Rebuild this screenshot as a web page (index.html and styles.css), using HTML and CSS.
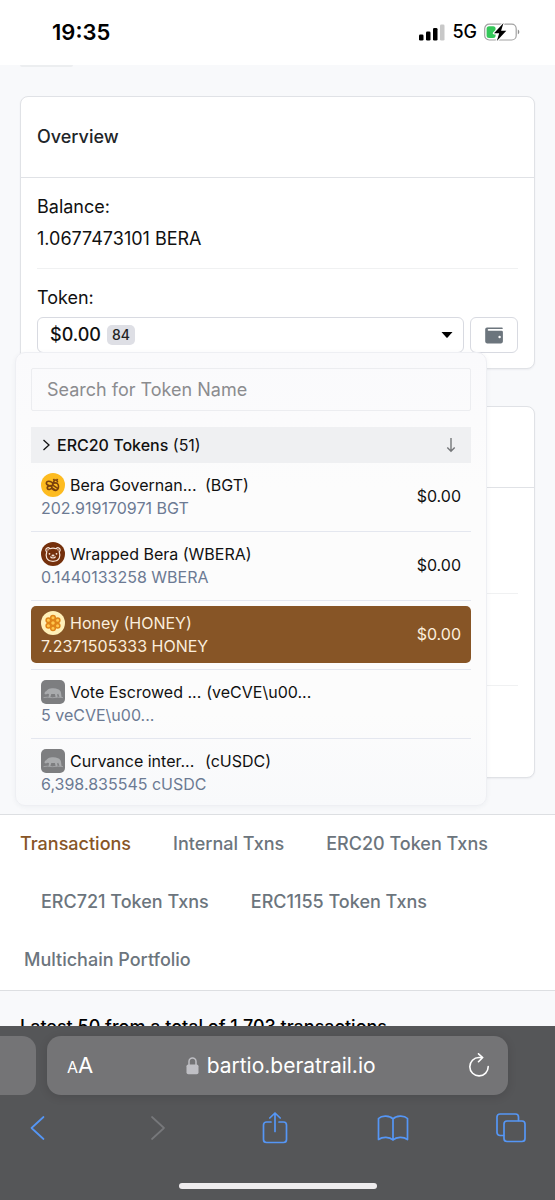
FILE: index.html
```html
<!DOCTYPE html>
<html lang="en">
<head>
<meta charset="utf-8">
<meta name="viewport" content="width=device-width, initial-scale=1">
<title>BeraTrail address</title>
<link rel="stylesheet" href="styles.css">
</head>
<body>
<svg width="0" height="0" class="defs" aria-hidden="true">
  <symbol id="bear" viewBox="0 0 24 24">
    <rect width="24" height="24" rx="5" fill="#7d7e80"/>
    <path d="M3.500 14c0-1.800.7-2.400 1.700-2.800 1-1.200 2.300-2.300 4.300-2.600 2.500-.5 5.500-.3 7.500.6 1.700.7 2.700 1.800 3 3.500l.6 4.600h-2l-1.400-3.500-1 .4.300 3.100h-1.800l-.8-3.300-3.600.1-1 3.200H7.600l.4-3.400-1.600-.2-1.400.9z" fill="#a9abad"/>
    <path d="M2.500 17.600l4-.4 5 .5 5-.5 5.500.4" fill="none" stroke="#a9abad" stroke-width=".8"/>
  </symbol>
</svg>
<div class="phone">
  <header class="status">
    <time class="clock">19:35</time>
    <div class="signals">
      <svg width="26" height="17" viewBox="0 0 26 17" aria-hidden="true">
        <rect x="0" y="10.500" width="4.500" height="6" rx="1.300"/><rect x="7" y="7.500" width="4.500" height="9" rx="1.300"/>
        <rect x="14" y="4" width="4.500" height="12.500" rx="1.300"/><rect x="21" y="0.500" width="4.500" height="16" rx="1.300" fill="#c8c8c8"/>
      </svg>
      <span class="network">5G</span>
      <svg width="36" height="18" viewBox="0 0 36 18" aria-hidden="true">
        <rect x=".7" y="1.200" width="31.500" height="15.800" rx="4.500" fill="none" stroke="#a2a2a2" stroke-width="1.200"/>
        <path d="M33.800 6.500c2 .8 2 4 0 4.800z" fill="#909090"/>
        <rect x="2.600" y="3.200" width="9" height="11.800" rx="2.500" fill="#34c759"/>
        <path d="M19.500 0L10 10.200h5.200L12.800 18 22.300 7.700h-5.200z" fill="#000" stroke="#fff" stroke-width="2.400" paint-order="stroke" stroke-linejoin="round"/>
      </svg>
    </div>
  </header>

  <main class="page">
    <div class="chip-end"></div>
    <section class="card">
      <h2 class="card-title">Overview</h2>
      <div class="card-body">
        <div class="row">
          <div>Balance:</div>
          <div>1.0677473101 BERA</div>
        </div>
        <div class="row row-token">
          <div>Token:</div>
          <div class="token-bar">
            <button class="token-toggle" type="button" aria-expanded="true">
              <span class="total">$0.00</span><span class="badge">84</span>
              <svg class="caret" width="12" height="6" viewBox="0 0 12 6" aria-hidden="true"><path d="M.5 0h11L6.600 5.500q-.6.6-1.200 0z"/></svg>
            </button>
            <button class="wallet" type="button" aria-label="Wallet">
              <svg width="18" height="17" viewBox="0 0 18 17" aria-hidden="true"><path d="M2 .5h15a.7.7 0 0 1 .7.7v.9H3.500a.8.800 0 0 0 0 1.600h13a1.400 1.400 0 0 1 1.400 1.400v9.500a1.800 1.800 0 0 1-1.800 1.800H2a1.800 1.800 0 0 1-1.800-1.800V2.300A1.800 1.800 0 0 1 2 .5z" fill="#6c757d"/><circle cx="14.600" cy="10" r="1.200" fill="#fff"/></svg>
            </button>
            <div class="menu">
              <input class="search" type="text" aria-label="Search for Token Name" placeholder="Search for Token Name">
              <div class="group">
                <svg width="9" height="12" viewBox="0 0 9 12" aria-hidden="true"><path d="M1.500 1l5.500 5-5.500 5" fill="none" stroke="#111" stroke-width="1.300"/></svg>
                <span><strong>ERC20 Tokens</strong> (51)</span>
                <svg class="sort" width="10" height="16" viewBox="0 0 10 16" aria-hidden="true"><path d="M5 1v13M1.300 10.500L5 14.200l3.700-3.700" fill="none" stroke="#75777a" stroke-width="1.400"/></svg>
              </div>
              <ul class="tokens">
                <li><a class="token" href="#">
                  <span class="info"><span class="name">
                    <svg width="24" height="24" viewBox="0 0 24 24" aria-hidden="true"><circle cx="12" cy="12" r="12" fill="#fdbb20"/><g fill="none" stroke="#7a400d" stroke-width="1.600"><ellipse cx="8.600" cy="10.600" rx="3.300" ry="2.100" transform="rotate(15 8.600 10.600)"/><ellipse cx="8.600" cy="14.600" rx="2.400" ry="1.700" transform="rotate(-25 8.600 14.600)"/><path d="M11.500 11.200c1-1.800 4.600-1.800 5.600.3 1 2.300.3 5-1.800 5.700-2 .6-4-.6-4.500-2.400M11.800 12.200l4.800 3.200M11 14.800l3.500 2.300M13 9.800c-.5-1.200 0-2.500 1.200-2.800s2.300.6 2.300 2.200M13.200 7.400L12.400 6M15.800 7.400l.8-1.400"/></g></svg>
                    <span class="long">Bera Governan...</span><span>(BGT)</span></span>
                  <span class="amount">202.919170971 BGT</span></span>
                  <span class="value">$0.00</span></a></li>
                <li><a class="token" href="#">
                  <span class="info"><span class="name">
                    <svg width="24" height="24" viewBox="0 0 24 24" aria-hidden="true"><circle cx="12" cy="12" r="12" fill="#75300c"/><g fill="none" stroke="#f5e6dc" stroke-width="1.200"><path d="M8.800 6.700c2-.7 4.400-.7 6.400 0 1-1.600 4-1.200 4 1.200 0 1-.5 1.500-1 1.900.8 2.200.9 4.600.1 6.300-1.100 2.400-3.400 3.200-6.300 3.200s-5.200-.8-6.300-3.200c-.8-1.700-.7-4.100.1-6.300-.5-.4-1-.9-1-1.900 0-2.400 3-2.800 4-1.200z"/><path d="M9.500 14.500c.5 2 4.500 2 5 0M6.500 8.300l1-1M17.500 8.300l-1-1"/></g><circle cx="8.500" cy="11.800" r=".9" fill="#f5e6dc"/><circle cx="15.500" cy="11.800" r=".9" fill="#f5e6dc"/><ellipse cx="12" cy="13.500" rx="1.500" ry="1" fill="#f5e6dc"/></svg>
                    <span>Wrapped Bera (WBERA)</span></span>
                  <span class="amount">0.1440133258 WBERA</span></span>
                  <span class="value">$0.00</span></a></li>
                <li><a class="token active" href="#">
                  <span class="info"><span class="name">
                    <svg width="24" height="24" viewBox="0 0 24 24" aria-hidden="true"><circle cx="12" cy="12" r="12" fill="#fff0b8"/><g fill="#ffc64b" stroke="#df8418" stroke-width="1.500"><circle cx="12" cy="12" r="2.500"/><circle cx="12" cy="6.800" r="2.300"/><circle cx="12" cy="17.200" r="2.300"/><circle cx="7.400" cy="9.300" r="2.300"/><circle cx="16.600" cy="9.300" r="2.300"/><circle cx="7.400" cy="14.700" r="2.300"/><circle cx="16.600" cy="14.700" r="2.300"/></g></svg>
                    <span>Honey (HONEY)</span></span>
                  <span class="amount">7.2371505333 HONEY</span></span>
                  <span class="value">$0.00</span></a></li>
                <li><a class="token" href="#">
                  <span class="info"><span class="name">
                    <svg width="24" height="24" aria-hidden="true"><use href="#bear"/></svg>
                    <span class="long">Vote Escrowed ...</span><span>(veCVE\u00...</span></span>
                  <span class="amount">5 veCVE\u00...</span></span></a></li>
                <li><a class="token" href="#">
                  <span class="info"><span class="name">
                    <svg width="24" height="24" aria-hidden="true"><use href="#bear"/></svg>
                    <span class="long">Curvance inter...</span><span>(cUSDC)</span></span>
                  <span class="amount">6,398.835545 cUSDC</span></span></a></li>
              </ul>
            </div>
          </div>
        </div>
      </div>
    </section>

    <section class="card">
      <div class="card-title"></div>
      <div class="card-body">
        <div class="row row-tall"></div>
        <div class="row row-short"></div>
        <div class="row row-short"></div>
      </div>
    </section>

    <nav class="tabs">
      <a class="current" href="#">Transactions</a>
      <a href="#">Internal Txns</a>
      <a href="#">ERC20 Token Txns</a>
      <a href="#">ERC721 Token Txns</a>
      <a href="#">ERC1155 Token Txns</a>
      <a class="portfolio" href="#">Multichain Portfolio</a>
    </nav>
    <p class="summary">Latest 50 from a total of 1,703 transactions</p>
  </main>

  <footer class="browser">
    <div class="address-row">
      <div class="previous-tab"></div>
      <div class="address">
        <button class="text-size" type="button" aria-label="Text size"><small>A</small>A</button>
        <span class="site">
          <svg width="13" height="18" viewBox="0 0 13 18" aria-hidden="true"><path d="M3 8V4.600a3.500 3.500 0 0 1 7 0V8" fill="none" stroke="#bfbfc4" stroke-width="1.500"/><rect x=".5" y="7.500" width="12" height="9.800" rx="1.800" fill="#bfbfc4"/></svg>
          bartio.beratrail.io
        </span>
        <button type="button" aria-label="Reload">
          <svg width="22" height="26" viewBox="0 0 22 26" fill="none" stroke="#fff" stroke-width="1.600" stroke-linecap="round" stroke-linejoin="round" aria-hidden="true"><path d="M20.200 13.500a9.200 9.200 0 1 1-9.200-9h3.500M10.500 .8l4.200 3.700-4.200 4.200"/></svg>
        </button>
      </div>
    </div>
    <div class="tools">
      <button type="button" aria-label="Back"><svg width="32" height="32" viewBox="0 0 32 32"><path d="M21.500 5L9.500 16l12 11"/></svg></button>
      <button type="button" aria-label="Forward" class="off"><svg width="32" height="32" viewBox="0 0 32 32"><path d="M12 5l12 11-12 11"/></svg></button>
      <button type="button" aria-label="Share"><svg width="32" height="32" viewBox="0 0 32 32"><path d="M12 10H7.500A3 3 0 0 0 4.500 13v14.500a3 3 0 0 0 3 3h17a3 3 0 0 0 3-3V13a3 3 0 0 0-3-3H20M16 19.500V1M10.800 6L16 1l5.200 5"/></svg></button>
      <button type="button" aria-label="Bookmarks"><svg width="32" height="32" viewBox="0 0 32 32"><path d="M16 7c-3-3.500-11-4-14.500-.5v21c4-3 11-3 14.500.5 3.500-3.500 10.500-3.500 14.500-.5v-21C27 3 19 3.500 16 7zm0 0v21"/></svg></button>
      <button type="button" aria-label="Tabs"><svg width="32" height="32" viewBox="0 0 32 32"><path d="M8.500 23.500H5a3 3 0 0 1-3-3V5a3 3 0 0 1 3-3h15.500a3 3 0 0 1 3 3v3.500"/><rect x="9" y="9" width="21" height="20.500" rx="3"/></svg></button>
    </div>
    <div class="home"></div>
  </footer>
</div>
</body>
</html>
```
FILE: styles.css
```css
* { box-sizing: border-box; }
body { margin: 0; font-family: Inter, "Liberation Sans", sans-serif; font-size: 18px; line-height: 32px; color: #111; background: #f8f9fb; }
button { border: 0; padding: 0; background: none; font: inherit; color: inherit; }
a { color: inherit; text-decoration: none; }
svg { display: block; flex: none; }
.defs { position: absolute; }
.phone { height: 100vh; display: flex; flex-direction: column; }

.status { flex: none; display: flex; justify-content: space-between; align-items: center; padding: 16px 35px 17px 52px; background: #fff; color: #000; }
.clock { font-size: 22px; font-weight: 600; }
.signals { display: flex; align-items: center; gap: 7px; }
.network { font-size: 18px; font-weight: 500; }

.page { flex: 1; min-height: 0; overflow: hidden; }
.chip-end { width: 53px; height: 2px; margin: 0 20px 29px; background: #eceef0; border-radius: 0 0 4px 4px; }
.card { margin: 0 20px 37px; background: #fff; border: 1px solid #e0e2e6; border-radius: 8px; box-shadow: 0 1px 2px rgba(30, 40, 60, .06); }
.card + .card { margin-bottom: 36px; }
.card-title { margin: 0; height: 81px; padding: 24px 16px; border-bottom: 1px solid #e0e2e6; font-size: 18px; font-weight: 500; color: #212529; }
.card-body { padding: 0 16px; }
.row { padding: 13px 0; }
.row + .row { border-top: 1px solid #f0f1f2; }
.row-token { padding-bottom: 15px; }
.row-tall { height: 105px; }
.row-short { height: 92px; }

.token-bar { position: relative; display: flex; gap: 6px; margin-top: 3px; }
.token-toggle { flex: 1; display: flex; align-items: center; gap: 6px; height: 36px; padding: 0 10px 0 12px; border: 1px solid #d8dae1; border-radius: 6px; }
.total { font-weight: 500; }
.badge { padding: 0 5px; border-radius: 5px; background: #dedfe5; font-size: 14px; font-weight: 500; line-height: 20px; color: #222; }
.caret { margin-left: auto; }
.wallet { display: grid; place-items: center; width: 48px; border: 1px solid #d8dae1; border-radius: 6px; }

.menu { position: absolute; z-index: 2; top: 35px; left: -22px; right: 31px; padding: 15px 15px 0; background: linear-gradient(#fafafc, #fcfcfc 30%, #fcfcfc 80%, #f8f9fb); border: 1px solid #eeeff3; border-radius: 10px; box-shadow: 0 1px 5px rgba(40, 50, 80, .05); }
.search { display: block; width: 100%; height: 43px; padding: 0 15px; border: 1px solid #ecedf0; border-radius: 2px; background: transparent; font: inherit; color: #111; }
.search::placeholder { color: #8b8c8f; opacity: 1; }
.group { display: flex; align-items: center; gap: 6px; height: 36px; margin-top: 16px; padding: 0 15px 0 11px; background: #eff0f2; font-size: 16px; }
.group strong { font-weight: 500; }
.sort { margin-left: auto; }
.tokens { margin: 0; padding: 0; list-style: none; font-size: 16px; }
.tokens li { padding: 5px 0 4px; }
.tokens li:not(:last-child) { padding-bottom: 6px; border-bottom: 1px solid #e4e7ef; }
.token { display: flex; justify-content: space-between; align-items: center; padding: 5px 10px 6px; border-radius: 5px; }
.name { display: flex; align-items: center; gap: 5px; line-height: 24px; }
.long { min-width: 130px; }
.amount { display: block; line-height: 22px; color: #6c7a93; }
.active, .active .amount { color: #fbeedd; }
.active { background: #875526; }

.tabs { display: flex; flex-wrap: wrap; padding: 0 20px 1px; background: #fff; border: solid #dddfe2; border-width: 1px 0; font-weight: 500; line-height: 58px; color: #6c757d; }
.tabs a { padding: 0 21px; }
.tabs .current { padding-left: 0; color: #875526; }
.tabs .portfolio { padding-left: 4px; }
.summary { margin: 20px 20px 0; font-size: 18px; font-weight: 500; white-space: nowrap; color: #000; }

.browser { flex: none; padding: 10px 0 11px; background: #555658; }
.address-row { display: flex; gap: 11px; padding-right: 47px; }
.previous-tab { width: 36px; border-radius: 0 14px 14px 0; background: #747476; }
.address { flex: 1; display: flex; justify-content: space-between; align-items: center; height: 59px; padding: 0 18px 0 20px; border-radius: 14px; background: #747476; color: #fff; box-shadow: 0 2px 10px rgba(0, 0, 0, .12); }
.text-size { font-size: 22px; }
.text-size small { font-size: 16px; }
.site { display: flex; align-items: center; gap: 8px; font-size: 21px; }
.tools { display: flex; justify-content: space-between; align-items: center; height: 65px; padding: 0 28px 0 22px; }
.tools svg { fill: none; stroke: #5596f5; stroke-width: 1.700; stroke-linecap: round; stroke-linejoin: round; }
.tools .off svg { stroke: #77787b; }
.home { width: 198px; height: 6px; margin: 23px auto 0; border-radius: 3px; background: #eeecee; }
```
